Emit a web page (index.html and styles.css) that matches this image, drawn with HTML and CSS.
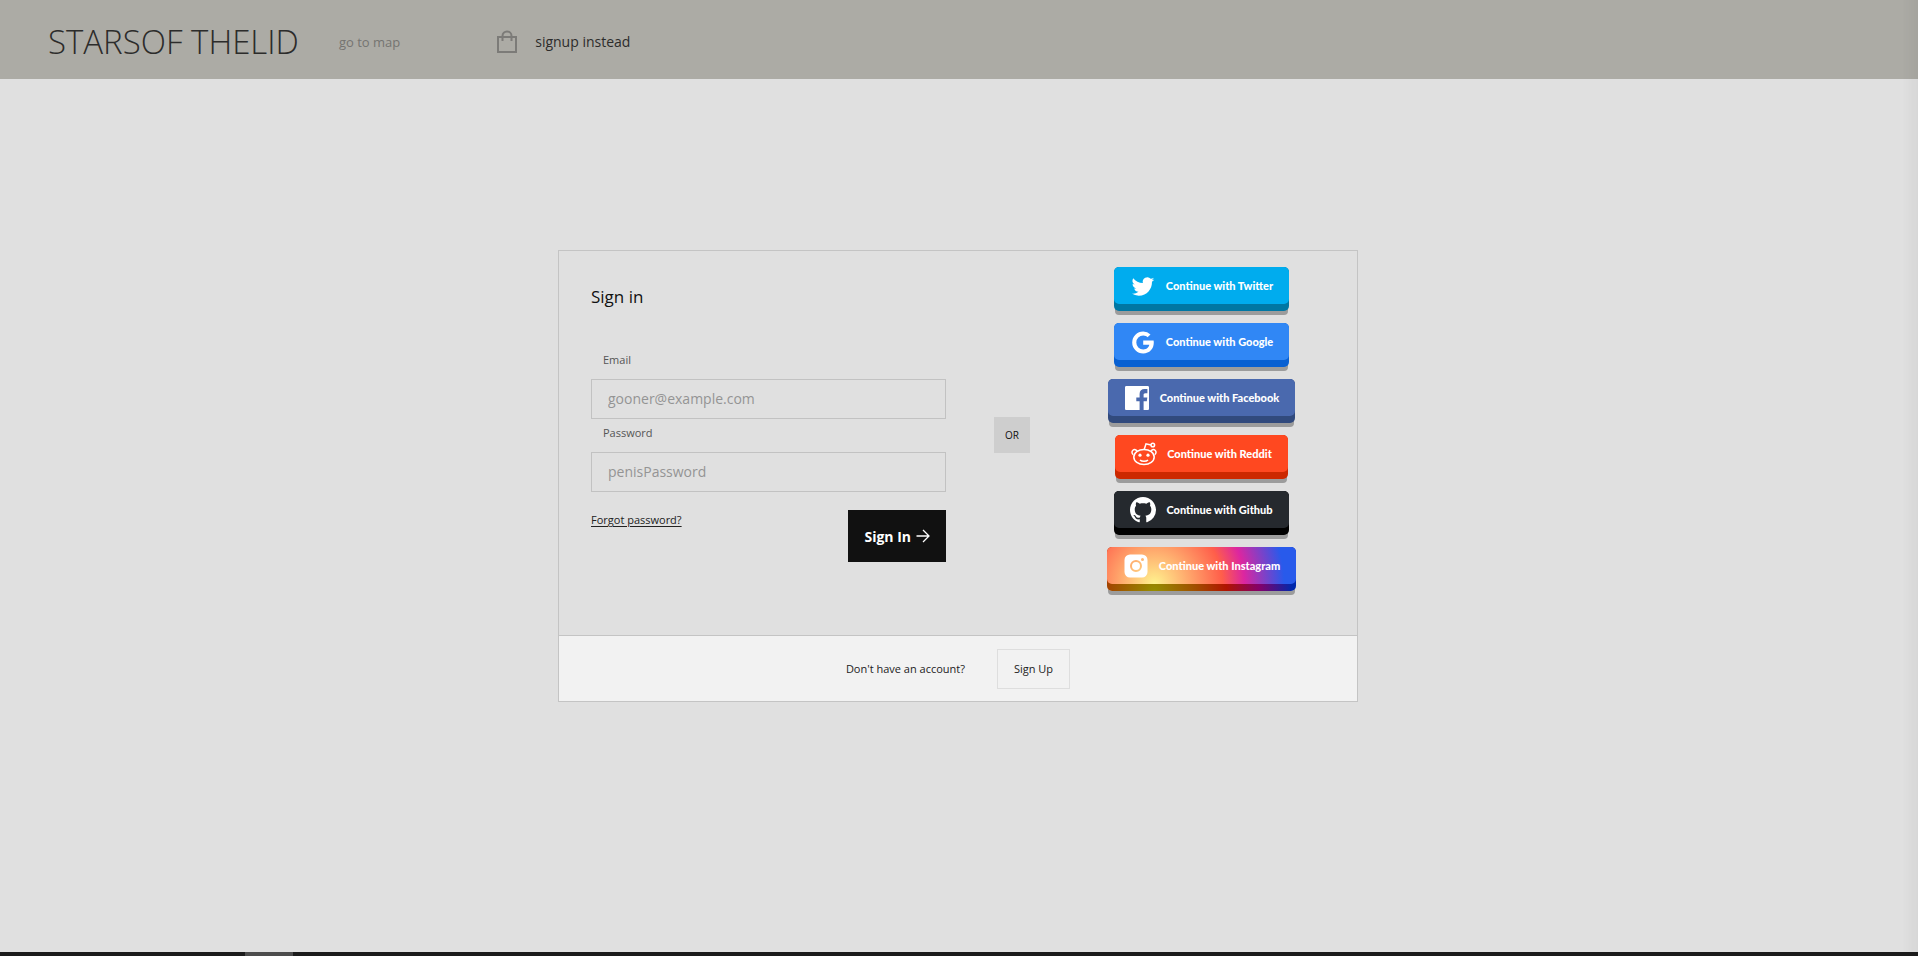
FILE: index.html
```html
<!DOCTYPE html>
<html lang="en">
<head>
<meta charset="utf-8">
<title>Sign in</title>
<link rel="stylesheet" href="styles.css">
</head>
<body>
<header class="topbar">
  <h1 class="brand">STARSOF THELID</h1>
  <a class="map-link" href="#">go to map</a>
  <a class="bag" href="#" aria-label="Bag"><svg width="20" height="24" viewBox="0 0 20 24" fill="none" stroke="currentColor" stroke-width="2"><path d="M1 7h18v15H1zM5.500 11V6a4.500 4.500 0 0 1 9 0v5"/></svg></a>
  <a class="signup-link" href="#">signup instead</a>
</header>
<main class="page">
  <section class="card">
    <div class="card-body">
      <form class="signin">
        <h2 class="title">Sign in</h2>
        <label class="label" for="email">Email</label>
        <input class="field" id="email" type="email" placeholder="gooner@example.com">
        <label class="label" for="password">Password</label>
        <input class="field" id="password" type="password" placeholder="penisPassword">
        <div class="actions">
          <a class="forgot" href="#">Forgot password?</a>
          <button class="submit" type="button">Sign In <svg width="14" height="14" viewBox="0 0 14 14" fill="none" stroke="currentColor" stroke-width="1.300"><path d="M0.500 7h12.500M7 1l6 6-6 6"/></svg></button>
        </div>
      </form>
      <div class="or">OR</div>
      <div class="social">
        <button class="provider twitter" type="button"><span class="face"><svg width="26" height="26" viewBox="0 0 24 24" fill="currentColor"><path d="M22.460 6c-.77.350-1.600.580-2.460.690a4.300 4.300 0 0 0 1.880-2.380c-.83.500-1.750.850-2.720 1.050A4.280 4.280 0 0 0 11.860 9.260C8.280 9.090 5.110 7.380 3 4.790a4.280 4.280 0 0 0 1.330 5.720A4.240 4.240 0 0 1 2.380 9.970v.05a4.280 4.280 0 0 0 3.440 4.200 4.300 4.300 0 0 1-1.930.070 4.290 4.290 0 0 0 4 2.980A8.520 8.520 0 0 1 1.540 19a12.100 12.100 0 0 0 6.530 1.920c7.880 0 12.200-6.530 12.200-12.190l-.01-.55A8.600 8.600 0 0 0 22.460 6z"/></svg>Continue with Twitter</span></button>
        <button class="provider google" type="button"><span class="face"><svg width="26" height="26" viewBox="0 0 26 26" fill="currentColor"><path d="M13.200 11.400v4.300h6.100c-.3 1.600-1.900 4.700-6.100 4.700a6.900 6.900 0 0 1 0-13.800c2.100 0 3.500.9 4.300 1.700l3-2.900A10.600 10.600 0 0 0 13.200 2.500a11 11 0 0 0 0 22c6.400 0 10.600-4.500 10.600-10.900 0-.8-.1-1.500-.2-2.200z"/></svg>Continue with Google</span></button>
        <button class="provider facebook" type="button"><span class="face"><svg width="26" height="26" viewBox="0 0 26 26" fill="currentColor"><path d="M2.300 1h21.400c.7 0 1.300.6 1.300 1.300v21.400c0 .7-.6 1.300-1.300 1.300h-4.100v-8.800h3.200l.5-3.800h-3.700v-2.300c0-1.100.3-1.800 1.800-1.800h2V4.100c-.4-.1-1.500-.2-2.900-.2-2.900 0-4.900 1.800-4.900 5v3.500h-3.300v3.800h3.300V25H2.300C1.600 25 1 24.400 1 23.700V2.300C1 1.600 1.600 1 2.300 1z"/></svg>Continue with Facebook</span></button>
        <button class="provider reddit" type="button"><span class="face"><svg width="26" height="26" viewBox="0 0 26 26" fill="none" stroke="currentColor" stroke-width="1.500"><ellipse cx="13" cy="16" rx="10.200" ry="7.500"/><path d="M2.300 13.600A2.700 2.700 0 1 1 6.200 10.300M23.700 13.600a2.700 2.700 0 1 0-3.900-3.300M13.200 8.500 15 2.800l5 1.200M9 19c1.800 1.800 6.200 1.800 8 0"/><circle cx="21.800" cy="4" r="1.800"/><circle cx="9" cy="14.200" r="1.600" fill="currentColor" stroke="none"/><circle cx="17" cy="14.200" r="1.600" fill="currentColor" stroke="none"/></svg>Continue with Reddit</span></button>
        <button class="provider github" type="button"><span class="face"><svg width="26" height="26" viewBox="0 0 16 16" fill="currentColor"><path d="M8 0C3.580 0 0 3.580 0 8c0 3.540 2.290 6.530 5.470 7.590.4.070.55-.17.55-.38 0-.19-.01-.82-.01-1.490-2.010.370-2.530-.490-2.690-.940-.09-.23-.48-.94-.82-1.130-.28-.15-.68-.52-.01-.53.630-.01 1.080.580 1.230.820.720 1.210 1.870.870 2.330.660.070-.52.280-.87.510-1.070-1.780-.2-3.640-.89-3.640-3.950 0-.87.310-1.590.820-2.150-.08-.2-.36-1.020.080-2.120 0 0 .67-.21 2.200.820.640-.18 1.320-.27 2-.27s1.360.090 2 .27c1.530-1.040 2.200-.82 2.200-.82.440 1.100.160 1.920.080 2.120.510.560.820 1.270.820 2.150 0 3.070-1.870 3.750-3.650 3.950.290.250.540.730.540 1.480 0 1.070-.01 1.930-.01 2.200 0 .21.150.460.550.380A8 8 0 0 0 16 8c0-4.420-3.580-8-8-8z"/></svg>Continue with Github</span></button>
        <button class="provider instagram" type="button"><span class="face"><svg width="26" height="26" viewBox="0 0 26 26"><path fill="currentColor" fill-rule="evenodd" d="M7 1.500h12a5.500 5.500 0 0 1 5.500 5.500v12a5.500 5.500 0 0 1-5.500 5.500H7A5.500 5.500 0 0 1 1.500 19V7A5.500 5.500 0 0 1 7 1.500zM13 7a6 6 0 1 0 0 12 6 6 0 0 0 0-12zm0 2a4 4 0 1 1 0 8 4 4 0 0 1 0-8zM19.500 5a1.500 1.500 0 1 0 0 3 1.500 1.500 0 0 0 0-3z"/></svg>Continue with Instagram</span></button>
      </div>
    </div>
    <footer class="card-footer">
      <span>Don't have an account?</span>
      <button class="signup" type="button">Sign Up</button>
    </footer>
  </section>
</main>
<div class="taskbar"><span class="taskbar-item"></span></div>
<div class="edge"></div>
</body>
</html>
```

FILE: styles.css
```css
* { box-sizing: border-box; }
body {
  margin: 0;
  min-height: 100vh;
  display: flex;
  flex-direction: column;
  background: #e0e0e0;
  color: #111;
  font-family: "Open Sans", "Noto Sans", sans-serif;
  font-size: 11px;
  font-weight: 500;
}
button, input { font: inherit; }
svg { display: block; flex: none; }
.topbar {
  display: flex;
  align-items: center;
  height: 79px;
  padding: 4px 48px 0;
  background: #acaba5;
}
.topbar a { text-decoration: none; }
.brand {
  margin: 0;
  font: 300 33px/40px "Open Sans", sans-serif;
  color: #2c2c2b;
}
.map-link { margin-left: 40px; font-size: 13px; color: #757471; }
.bag { margin-left: 97px; color: #7c7b78; }
.signup-link { margin-left: 18px; font-size: 14px; color: #2c2c2b; }
.page { flex: 1; padding: 171px 18px 64px 16px; }
.card {
  width: 100%;
  max-width: 800px;
  margin: 0 auto;
  border: 1px solid #c4c4c4;
}
.card-body {
  display: grid;
  grid-template-columns: minmax(0, 1fr) 36px 247px;
  column-gap: 48px;
  align-items: center;
  padding: 16px 32px 32px;
}
.signin { align-self: start; display: flex; flex-direction: column; padding-top: 16px; }
.title { margin: 0 0 35px; font-size: 17px; line-height: 28px; font-weight: 500; }
.label { padding: 4px 12px 9px; line-height: 20px; font-size: 11px; color: #555; }
.field {
  height: 40px;
  padding: 0 16px 2px;
  border: 1px solid #c2c2c2;
  border-radius: 0;
  background: transparent;
  font-size: 14px;
  outline: 0;
}
.field::placeholder { color: #949494; opacity: 1; }
.actions { display: flex; justify-content: space-between; align-items: flex-start; padding-top: 18px; }
.forgot { line-height: 20px; color: #222; text-underline-offset: 2px; }
.submit {
  display: flex;
  align-items: center;
  gap: 5px;
  height: 52px;
  padding: 0 16px;
  border: 0;
  background: #111;
  color: #fff;
  font-size: 14px;
  font-weight: 700;
}
.or {
  display: grid;
  place-items: center;
  height: 36px;
  background: #cecece;
  font-size: 10px;
}
.social { display: flex; flex-direction: column; align-items: center; gap: 12px; padding-bottom: 12px; }
.provider {
  padding: 0 0 7px;
  border: 0;
  border-radius: 5px;
  box-shadow: 0 5px 0 -1px #9c9c9c;
  color: #fff;
  font-family: Lato, "Open Sans", sans-serif;
  font-size: 11px;
  font-weight: 900;
}
.face {
  display: flex;
  align-items: center;
  gap: 10px;
  height: 37px;
  padding: 0 16px;
  border-radius: 5px;
}
.twitter { background: #0077a3; }
.twitter .face { background: #00acee; }
.google { background: #0860d2; }
.google .face { background: #3087f5; }
.facebook { background: #314a7d; }
.facebook .face { background: #4a69ae; }
.reddit { background: #cc2800; }
.reddit .face { background: #ff4820; }
.github { background: #000; }
.github .face { background: #25292e; }
.instagram { background: radial-gradient(circle at 25% 100%, #968e00 0, #a05000 40px, #b01400 72px, #85006a 105px, #0028ac 138px); }
.instagram .face { background: radial-gradient(circle at 25% 100%, #fff38e 0, #ffb673 28px, #ff5e4a 68px, #dc26a0 90px, #285aeb 130px); }
.card-footer {
  display: flex;
  justify-content: center;
  align-items: center;
  gap: 32px;
  height: 66px;
  border-top: 1px solid #c4c4c4;
  background: #f2f2f2;
  color: #222;
}
.signup {
  height: 40px;
  padding: 0 16px;
  border: 1px solid #dedede;
  background: transparent;
  color: #222;
}
.taskbar { height: 4px; background: #1b1b1b; }
.taskbar-item { display: block; width: 48px; height: 4px; margin-left: 245px; background: #4c4c4c; }
.edge {
  position: fixed;
  inset: 0 0 4px auto;
  width: 16px;
  background: linear-gradient(to right, rgba(0, 0, 0, 0), rgba(0, 0, 0, 0.040));
}
```
